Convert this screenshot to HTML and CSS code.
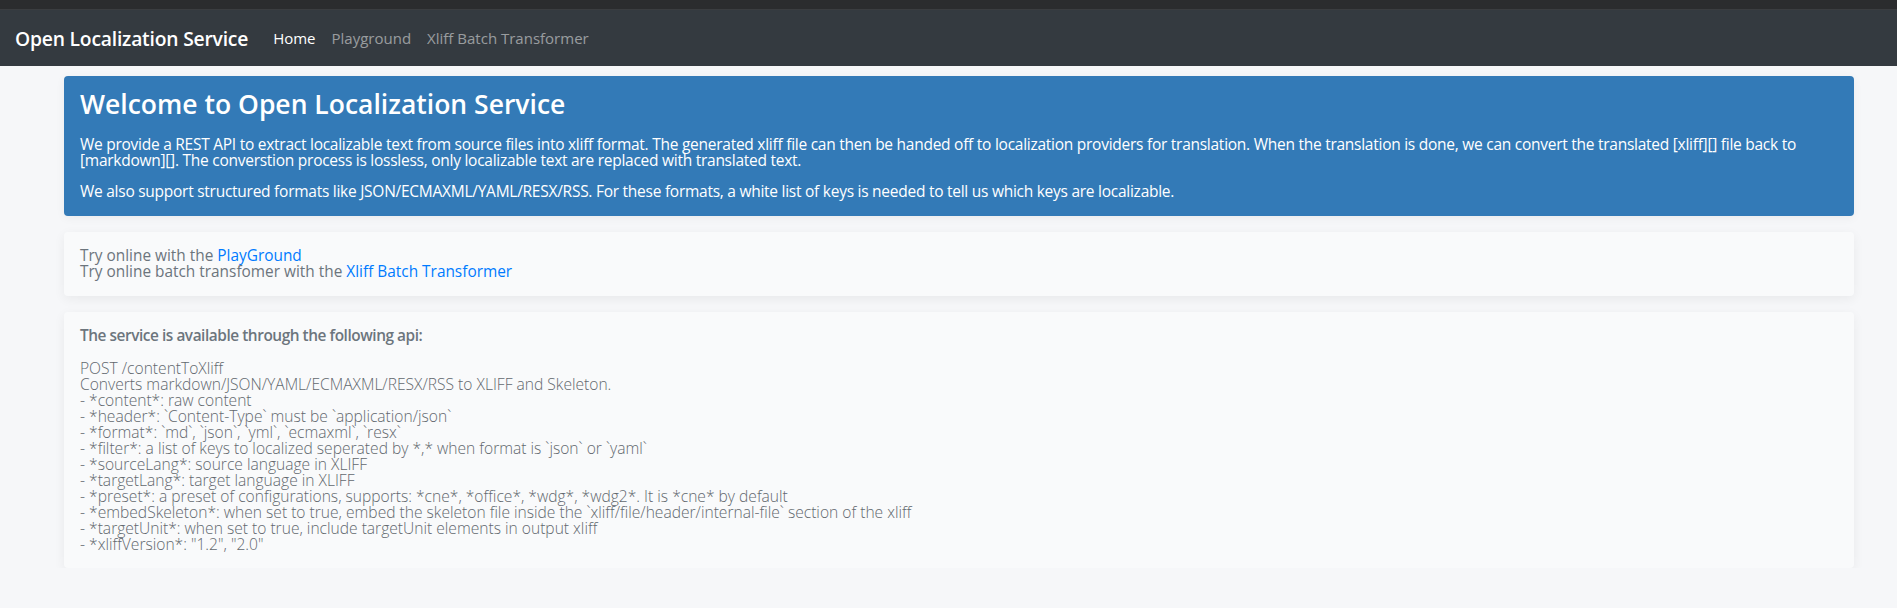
FILE: index.html
```html
<!DOCTYPE html>
<html lang="en">
<head>
<meta charset="utf-8">
<title>Open Localization Service</title>
<link rel="stylesheet" href="styles.css">
</head>
<body>
<div class="topstrip"></div>
<nav class="navbar">
  <a class="brand" href="#">Open Localization Service</a>
  <ul class="nav">
    <li><a class="nav-link active" href="#">Home</a></li>
    <li><a class="nav-link" href="#">Playground</a></li>
    <li><a class="nav-link" href="#">Xliff Batch Transformer</a></li>
  </ul>
</nav>
<main class="container">
  <section class="hero">
    <h1>Welcome to Open Localization Service</h1>
    <p>We provide a REST API to extract localizable text from source files into xliff format. The generated xliff file can then be handed off to localization providers for translation. When the translation is done, we can convert the translated [xliff][] file back to [markdown][]. The converstion process is lossless, only localizable text are replaced with translated text.</p>
    <p>We also support structured formats like JSON/ECMAXML/YAML/RESX/RSS. For these formats, a white list of keys is needed to tell us which keys are localizable.</p>
  </section>
  <section class="card">
    <div class="line">Try online with the <a href="#">PlayGround</a></div>
    <div class="line">Try online batch transfomer with the <a href="#">Xliff Batch Transformer</a></div>
  </section>
  <section class="card">
    <p class="api-title">The service is available through the following api:</p>
    <div class="api">POST /contentToXliff
Converts markdown/JSON/YAML/ECMAXML/RESX/RSS to XLIFF and Skeleton.
- *content*: raw content
- *header*: `Content-Type` must be `application/json`
- *format*: `md`, `json`, `yml`, `ecmaxml`, `resx`
- *filter*: a list of keys to localized seperated by *,* when format is `json` or `yaml`
- *sourceLang*: source language in XLIFF
- *targetLang*: target language in XLIFF
- *preset*: a preset of configurations, supports: *cne*, *office*, *wdg*, *wdg2*. It is *cne* by default
- *embedSkeleton*: when set to true, embed the skeleton file inside the `xliff/file/header/internal-file` section of the xliff
- *targetUnit*: when set to true, include targetUnit elements in output xliff
- *xliffVersion*: "1.2", "2.0"</div>
  </section>
</main>
</body>
</html>
```

FILE: styles.css
```css
* { box-sizing: border-box; }

html, body {
  margin: 0;
  padding: 0;
}

body {
  background: #f6f7f9;
  font-family: "Open Sans", "Noto Sans", sans-serif;
  font-size: 16px;
  color: #6c757d;
  overflow: hidden;
}

.topstrip {
  height: 10px;
  background: #2b2c2e;
  border-bottom: 1px solid #3b3d40;
}

.navbar {
  height: 56px;
  background: #343a40;
  display: flex;
  align-items: center;
  padding: 0 15px;
}

.brand {
  color: #fff;
  font-size: 19.3px;
  font-weight: 600;
  text-decoration: none;
  margin-right: 17px;
  letter-spacing: -0.2px;
}

.nav {
  list-style: none;
  margin: 0;
  padding: 0;
  display: flex;
}

.nav-link {
  display: block;
  padding: 0 8px;
  font-size: 15px;
  color: rgba(255, 255, 255, 0.5);
  text-decoration: none;
}

.nav-link.active {
  color: #fff;
}

.container {
  margin: 10px 43px 0 64px;
  display: flex;
  flex-direction: column;
  gap: 16px;
}

.hero {
  background: #337ab7;
  color: #fff;
  border-radius: 4px;
  padding: 13px 16px 17px;
  box-shadow: 0 2px 10px rgba(0, 0, 0, 0.05);
}

.hero h1 {
  margin: 0 0 16px;
  font-size: 26.5px;
  font-weight: 600;
  line-height: 31px;
}

.hero p {
  margin: 0 0 15px;
  font-size: 15.5px;
  letter-spacing: -0.26px;
  line-height: 16px;
}

.hero p:last-child {
  margin-bottom: 0;
}

.card {
  background: #f9fafb;
  border-radius: 4px;
  padding: 16px 16px 16px;
  box-shadow: 0 3px 12px rgba(0, 0, 0, 0.06);
}

.line {
  font-size: 15.4px;
  line-height: 16px;
}

.line a {
  color: #007bff;
  text-decoration: none;
}

.api-title {
  margin: 0 0 16px;
  font-size: 15.4px;
  font-weight: 600;
  letter-spacing: -0.45px;
  line-height: 16px;
  color: #6c757d;
}

.api {
  white-space: pre-line;
  font-size: 15.6px;
  font-weight: 300;
  line-height: 16px;
  color: #62686e;
}
```
